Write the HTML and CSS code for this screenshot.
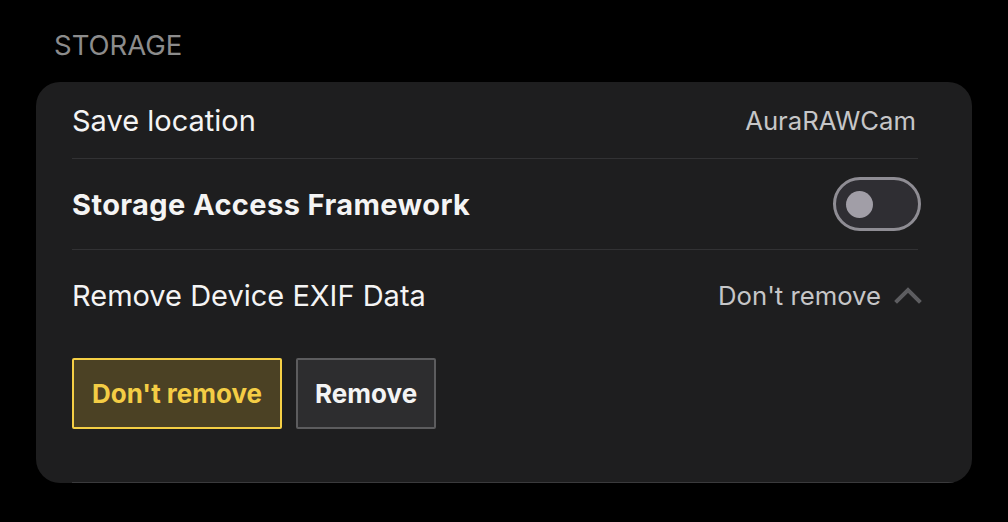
FILE: index.html
```html
<!DOCTYPE html>
<html lang="en">
<head>
<meta charset="utf-8">
<link rel="stylesheet" href="styles.css">
</head>
<body>
<div class="screen">
  <div class="section-title">STORAGE</div>
  <div class="card">
    <div class="row row-first">
      <span class="label">Save location</span>
      <span class="value">AuraRAWCam</span>
    </div>
    <div class="divider"></div>
    <div class="row">
      <span class="label label-bold">Storage Access Framework</span>
      <span class="switch"><span class="knob"></span></span>
    </div>
    <div class="divider"></div>
    <div class="row">
      <span class="label">Remove Device EXIF Data</span>
      <span class="value-group">
        <span class="value value-inline">Don't remove</span>
        <svg class="chevron" width="28" height="18" viewBox="0 0 28 18" aria-hidden="true">
          <path d="M3 15 L14 4 L25 15" fill="none" stroke="#5d5d60" stroke-width="4" stroke-linecap="square"/>
        </svg>
      </span>
    </div>
    <div class="options">
      <button class="opt opt-selected">Don't remove</button>
      <button class="opt">Remove</button>
    </div>
    <div class="card-end"></div>
  </div>
</div>
</body>
</html>
```
FILE: styles.css
```css
html, body {
  margin: 0;
  padding: 0;
  background: #000;
}
body {
  font-family: Inter, Roboto, "Liberation Sans", sans-serif;
  color: #f2f2f2;
  width: 1008px;
  height: 522px;
  overflow: hidden;
}
.screen {
  padding-top: 27px;
}
.section-title {
  padding-left: 54px;
  font-size: 27.5px;
  line-height: 36px;
  color: #8c8c8c;
  height: 55px;
}
.card {
  margin: 0 36px;
  height: 401px;
  background: #1e1e1f;
  border-radius: 24px;
  overflow: hidden;
  display: flex;
  flex-direction: column;
  padding-left: 36px;
  box-sizing: border-box;
}
.row {
  display: flex;
  align-items: center;
  justify-content: space-between;
  height: 90px;
  margin-right: 52px;
}
.row-first {
  height: 76px;
}
.label {
  font-size: 29px;
  color: #f4f4f4;
}
.label-bold {
  font-weight: 700;
  letter-spacing: 0.4px;
}
.value {
  font-size: 25.7px;
  color: #c6c6c8;
  margin-right: 4px;
}
.value-inline {
  margin-right: 0;
}
.divider {
  height: 1px;
  background: #323234;
  margin-right: 54px;
}
.switch {
  width: 88px;
  height: 54px;
  box-sizing: border-box;
  border: 3px solid #8f8d94;
  border-radius: 27px;
  background: #2f2e33;
  display: flex;
  align-items: center;
  padding-left: 10px;
  margin-right: -1px;
}
.knob {
  width: 27px;
  height: 27px;
  border-radius: 50%;
  background: #a19ea7;
}
.value-group {
  display: flex;
  align-items: center;
  gap: 13px;
  margin-right: -2px;
}
.chevron {
  display: block;
}
.options {
  display: flex;
  gap: 14px;
  margin-top: 18px;
}
.opt {
  height: 71px;
  padding: 0 17px;
  border-radius: 2px;
  font-family: inherit;
  font-size: 26px;
  font-weight: 700;
  background: #2d2d2f;
  border: 2px solid #5c5c5e;
  color: #f4f4f4;
}
.opt-selected {
  padding: 0 18px;
  background: #4b4124;
  border-color: #f5cf45;
  color: #f4cd45;
}
.card-end {
  margin-top: auto;
  height: 1px;
  background: #3a3a3c;
}
```
